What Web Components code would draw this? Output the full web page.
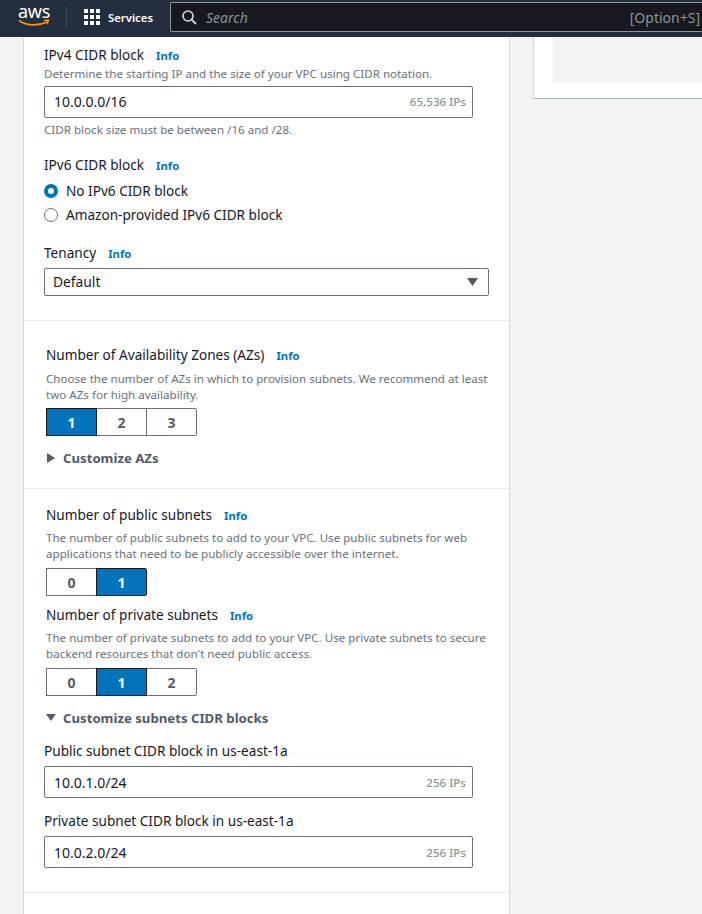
<!DOCTYPE html>
<html>
<head>
<meta charset="utf-8">
<title>VPC settings</title>
<style>
html, body { margin: 0; height: 914px; overflow: hidden; background: #f2f3f3; }
body { font-family: "Noto Sans", "Open Sans", sans-serif; color: #16191f; display: flex; flex-direction: column; }
</style>
</head>
<body>
<aws-topbar></aws-topbar>
<vpc-page>
  <vpc-section pad="0 20px 24px">
    <vpc-label top="8" info>IPv4 CIDR block</vpc-label>
    <vpc-desc>Determine the starting IP and the size of your VPC using CIDR notation.</vpc-desc>
    <cidr-input value="10.0.0.0/16" ips="65,536 IPs" top="4" height="32"></cidr-input>
    <vpc-desc top="4">CIDR block size must be between /16 and /28.</vpc-desc>
    <vpc-label top="18" info>IPv6 CIDR block</vpc-label>
    <vpc-radio checked top="5">No IPv6 CIDR block</vpc-radio>
    <vpc-radio top="4">Amazon-provided IPv6 CIDR block</vpc-radio>
    <vpc-label top="18" info>Tenancy</vpc-label>
    <vpc-select top="4">Default</vpc-select>
  </vpc-section>
  <vpc-section pad="24px 22px 20px">
    <vpc-label info>Number of Availability Zones (AZs)</vpc-label>
    <vpc-desc top="5">Choose the number of AZs in which to provision subnets. We recommend at least<br>two AZs for high availability.</vpc-desc>
    <seg-control options="1,2,3" selected="1" top="6"></seg-control>
    <vpc-expander top="12">Customize AZs</vpc-expander>
  </vpc-section>
  <vpc-section pad="16px 0 24px 22px">
    <vpc-label info>Number of public subnets</vpc-label>
    <vpc-desc top="4">The number of public subnets to add to your VPC. Use public subnets for web<br>applications that need to be publicly accessible over the internet.</vpc-desc>
    <seg-control options="0,1" selected="1" top="7"></seg-control>
    <vpc-label top="9" info>Number of private subnets</vpc-label>
    <vpc-desc top="4">The number of private subnets to add to your VPC. Use private subnets to secure<br>backend resources that don't need public access.</vpc-desc>
    <seg-control options="0,1,2" selected="1" top="7"></seg-control>
    <vpc-expander top="12" open>Customize subnets CIDR blocks</vpc-expander>
    <vpc-label top="13" shift="-2">Public subnet CIDR block in us-east-1a</vpc-label>
    <cidr-input value="10.0.1.0/24" ips="256 IPs" top="5" height="32" shift="-2"></cidr-input>
    <vpc-label top="13" shift="-2">Private subnet CIDR block in us-east-1a</vpc-label>
    <cidr-input value="10.0.2.0/24" ips="256 IPs" top="5" height="32" shift="-2"></cidr-input>
  </vpc-section>
</vpc-page>

<script>
const topbarTemplate = document.createElement('template');
topbarTemplate.innerHTML = `
<style>
:host { display: flex; align-items: center; height: 37px; flex: none; background: #232f3e; color: #fff; font-size: 11.3px; box-sizing: border-box; }
.logo { width: 66px; flex: none; position: relative; height: 37px; }
.logo span { position: absolute; left: 18px; top: 0; font: 400 18px/22px "Noto Sans", sans-serif; letter-spacing: -.3px; color: #fff; }
.logo svg { position: absolute; left: 18px; top: 19px; }
.sep { width: 1px; height: 22px; margin-bottom: 3px; background: #414d5c; flex: none; }
.grid { margin: 0 0 3px 17px; width: 16px; height: 16px; display: grid; grid-template-columns: repeat(3, 4px); grid-auto-rows: 4px; gap: 2px; flex: none; }
.grid i { background: #fff; }
.services { margin: 0 0 3px 8px; font-weight: 600; width: 62px; flex: none; white-space: nowrap; }
.search { flex: 1; height: 30px; margin-bottom: 3px; box-sizing: border-box; background: #16191f; border: 1px solid #879596; border-right: 0; border-radius: 2px 0 0 2px; display: flex; align-items: center; padding: 0 2px 0 11px; font-size: 14px; color: #879596; }
.search svg { flex: none; }
.search em { margin-left: 9px; flex: 1; }
</style>
<div class="logo"><span>aws</span>
  <svg width="32" height="9" viewBox="0 0 32 9"><path d="M1 1.5C8 6.5 19 7.5 29 3" fill="none" stroke="#ff9900" stroke-width="1.6"/><path d="M26 1.6l4.3-.6-1 4" fill="none" stroke="#ff9900" stroke-width="1.4"/></svg>
</div>
<div class="sep"></div>
<div class="grid"><i></i><i></i><i></i><i></i><i></i><i></i><i></i><i></i><i></i></div>
<div class="services">Services</div>
<div class="search">
  <svg width="15" height="15" viewBox="0 0 15 15"><circle cx="6" cy="6" r="5" fill="none" stroke="#d5dbdb" stroke-width="1.6"/><path d="M9.6 9.6L14 14" stroke="#d5dbdb" stroke-width="1.8"/></svg>
  <em>Search</em><span>[Option+S]</span>
</div>
`;
class AwsTopbar extends HTMLElement {
  constructor() {
    super();
    this.attachShadow({ mode: 'open' });
    this.shadowRoot.appendChild(topbarTemplate.content.cloneNode(true));
  }
}
customElements.define('aws-topbar', AwsTopbar);

const pageTemplate = document.createElement('template');
pageTemplate.innerHTML = `
<style>
:host { display: grid; grid-template-columns: 487px 169px; column-gap: 23px; padding-left: 23px; height: 877px; overflow: hidden; flex: none; }
.main { background: #fff; border-left: 1px solid #d5dbdb; border-right: 1px solid #d5dbdb; height: 900px; box-sizing: border-box; }
.side { background: #fff; height: 62px; border-left: 1px solid #d5dbdb; border-bottom: 1px solid #aab7b8; box-sizing: border-box; padding: 0 0 16px 19px; }
.side div { background: #f2f3f3; height: 100%; }
</style>
<div class="main"><slot></slot></div>
<div class="side"><div></div></div>
`;
class VpcPage extends HTMLElement {
  constructor() {
    super();
    this.attachShadow({ mode: 'open' });
    this.shadowRoot.appendChild(pageTemplate.content.cloneNode(true));
  }
}
customElements.define('vpc-page', VpcPage);

class VpcSection extends HTMLElement {
  constructor() {
    super();
    this.attachShadow({ mode: 'open' });
    this.shadowRoot.innerHTML = `
<style>
:host { display: block; border-bottom: 1px solid #eaeded; }
div { padding: ${this.getAttribute('pad') || '0'}; }
</style>
<div><slot></slot></div>`;
  }
}
customElements.define('vpc-section', VpcSection);

// the vertical and horizontal nudges come in as attributes
const offsets = (el) => `margin-top:${el.getAttribute('top') || 0}px;margin-left:${el.getAttribute('shift') || 0}px;`;

class VpcLabel extends HTMLElement {
  constructor() {
    super();
    this.attachShadow({ mode: 'open' });
    this.shadowRoot.innerHTML = `
<style>
:host { display: block; ${offsets(this)} font-size: 13.6px; line-height: 20px; color: #16191f; }
a { margin-left: 12px; font-size: 11.3px; font-weight: 700; color: #0073bb; }
</style>
<slot></slot>${this.hasAttribute('info') ? '<a>Info</a>' : ''}`;
  }
}
customElements.define('vpc-label', VpcLabel);

class VpcDesc extends HTMLElement {
  constructor() {
    super();
    this.attachShadow({ mode: 'open' });
    this.shadowRoot.innerHTML = `
<style>
:host { display: block; ${offsets(this)} font-size: 11.6px; line-height: 15.5px; color: #687078; white-space: nowrap; }
</style>
<slot></slot>`;
  }
}
customElements.define('vpc-desc', VpcDesc);

class CidrInput extends HTMLElement {
  constructor() {
    super();
    this.attachShadow({ mode: 'open' });
    this.shadowRoot.innerHTML = `
<style>
:host { display: flex; ${offsets(this)} width: 429px; height: ${this.getAttribute('height')}px; box-sizing: border-box; align-items: center; justify-content: space-between; padding: 0 6px 0 9px; border: 1px solid #687078; border-radius: 2px; background: #fff; font-size: 14px; color: #16191f; }
small { font-size: 11.6px; font-weight: 500; color: #879596; }
</style>
<span>${this.getAttribute('value')}</span><small>${this.getAttribute('ips')}</small>`;
  }
}
customElements.define('cidr-input', CidrInput);

class VpcRadio extends HTMLElement {
  constructor() {
    super();
    this.attachShadow({ mode: 'open' });
    const on = this.hasAttribute('checked');
    this.shadowRoot.innerHTML = `
<style>
:host { display: flex; ${offsets(this)} align-items: center; gap: 8px; font-size: 13.6px; line-height: 20px; color: #16191f; }
i { width: 14px; height: 14px; border-radius: 50%; flex: none; box-sizing: border-box; }
.on { border: 4px solid #0073bb; background: #fff; }
.off { border: 1px solid #687078; background: #fff; }
</style>
<i class="${on ? 'on' : 'off'}"></i><span><slot></slot></span>`;
  }
}
customElements.define('vpc-radio', VpcRadio);

class VpcSelect extends HTMLElement {
  constructor() {
    super();
    this.attachShadow({ mode: 'open' });
    this.shadowRoot.innerHTML = `
<style>
:host { display: flex; ${offsets(this)} width: 445px; height: 28px; box-sizing: border-box; align-items: center; justify-content: space-between; padding: 0 10px 2px 8px; border: 1px solid #687078; border-radius: 2px; font-size: 13.8px; color: #16191f; }
svg { display: block; margin-top: 2px; }
</style>
<span><slot></slot></span><svg width="11" height="8" viewBox="0 0 11 8"><path d="M0 0h11L5.5 8z" fill="#545b64"/></svg>`;
  }
}
customElements.define('vpc-select', VpcSelect);

class SegControl extends HTMLElement {
  constructor() {
    super();
    this.attachShadow({ mode: 'open' });
    const picked = this.getAttribute('selected');
    const items = this.getAttribute('options').split(',')
      .map((o) => `<button class="${o === picked ? 'on' : ''}">${o}</button>`).join('');
    this.shadowRoot.innerHTML = `
<style>
:host { display: inline-flex; ${offsets(this)} vertical-align: top; height: 28px; }
button { width: 51px; height: 28px; margin: 0 -1px 0 0; padding: 0; box-sizing: border-box; background: #fff; border: 1px solid #687078; font: 700 14px "Noto Sans", sans-serif; color: #545b64; }
button:first-child { border-radius: 2px 0 0 2px; }
button:last-child { border-radius: 0 2px 2px 0; margin-right: 0; }
button.on { background: #0073bb; color: #fff; border-color: #16191f; position: relative; }
</style>
${items}`;
  }
}
customElements.define('seg-control', SegControl);

class VpcExpander extends HTMLElement {
  constructor() {
    super();
    this.attachShadow({ mode: 'open' });
    const open = this.hasAttribute('open');
    const arrow = open ? 'M0 1h10L5 8z' : 'M1 0l8 5-8 5z';
    this.shadowRoot.innerHTML = `
<style>
:host { display: flex; ${offsets(this)} align-items: center; gap: 7px; height: 20px; font-size: 13.2px; font-weight: 700; color: #545b64; }
svg { flex: none; }
</style>
<svg width="10" height="10" viewBox="0 0 10 10"><path d="${arrow}" fill="#545b64"/></svg><span><slot></slot></span>`;
  }
}
customElements.define('vpc-expander', VpcExpander);
</script>
</body>
</html>
